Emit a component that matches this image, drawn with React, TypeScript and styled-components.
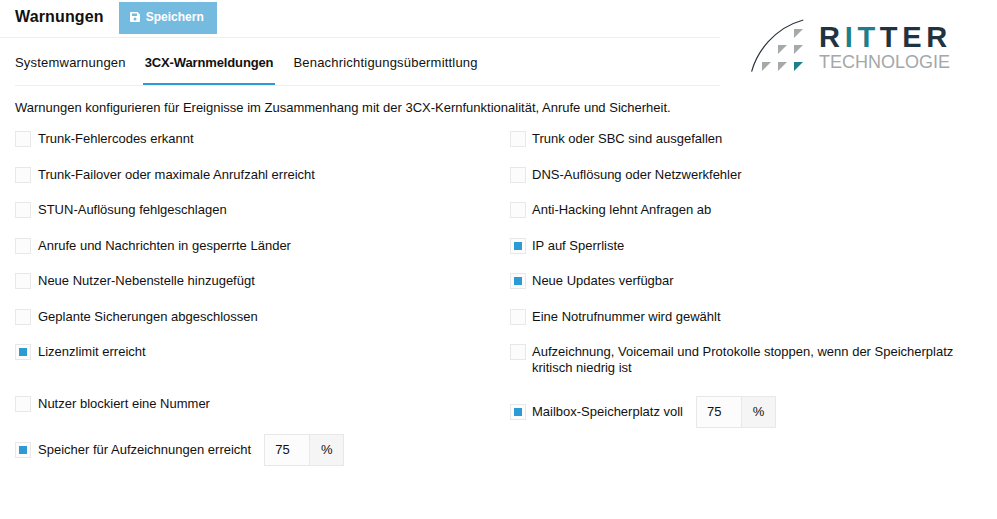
import React from 'react';
import styled, { createGlobalStyle } from 'styled-components';

const GlobalStyle = createGlobalStyle`
  html, body {
    margin: 0;
    background: #fff;
    color: #111;
    font-family: "Liberation Sans", Arial, sans-serif;
    font-size: 13px;
  }
`;

const Page = styled.div`
  width: 997px;
  height: 519px;
  overflow: hidden;
`;

const Top = styled.div`
  display: flex;
`;

const TopLeft = styled.div`
  width: 720px;
  flex: none;
`;

const Toolbar = styled.div`
  display: flex;
  align-items: flex-start;
  height: 38px;
  padding: 2px 0 0 15px;
  border-bottom: 1px solid #eee;
  box-sizing: border-box;
`;

const Title = styled.h1`
  margin: 3px 15px 0 0;
  font-size: 16px;
  line-height: 24px;
  font-weight: 700;
  letter-spacing: 0.15px;
`;

const SaveButton = styled.button`
  display: flex;
  align-items: center;
  gap: 6px;
  width: 98px;
  height: 32px;
  padding: 0 0 2px 11px;
  border: 0;
  background: #75bbe0;
  color: #fff;
  font: 700 12px "Liberation Sans", Arial, sans-serif;
`;

const Tabs = styled.div`
  display: flex;
  margin-left: 15px;
  height: 48px;
  border-bottom: 1px solid #eee;
  box-sizing: border-box;
`;

const Tab = styled.div<{ $active?: boolean }>`
  display: flex;
  align-items: center;
  height: 47px;
  padding: 3px 2px 0;
  margin-right: 16px;
  font-size: 13px;
  font-weight: ${(p) => (p.$active ? 700 : 400)};
  letter-spacing: ${(p) => (p.$active ? '-0.13px' : '0.2px')};
  border-bottom: 2px solid ${(p) => (p.$active ? '#2d9ad4' : 'transparent')};
  box-sizing: border-box;
  &:first-child {
    padding-left: 0;
    margin-right: 15px;
  }
`;

const Logo = styled.div`
  display: flex;
  align-items: flex-start;
  margin: 19px 0 0 29px;
`;

const LogoText = styled.div`
  display: flex;
  flex-direction: column;
  margin-left: 14px;
  margin-top: 4px;
`;

const LogoName = styled.div`
  font-size: 29px;
  line-height: 29px;
  font-weight: 700;
  letter-spacing: 4.7px;
  color: #1f3340;
`;

const LogoAccent = styled.span`
  color: #1d7f8c;
`;

const LogoSub = styled.div`
  font-size: 18px;
  line-height: 20px;
  color: #a3a8a8;
`;

const Intro = styled.p`
  margin: 14px 0 15px 15px;
  line-height: 16px;
`;

const Options = styled.div`
  display: grid;
  grid-template-columns: 495px 465px;
  grid-template-rows: repeat(6, 35.5px) 52px 38px 32px;
  padding-left: 15px;
`;

const Row = styled.label<{ $right?: boolean }>`
  display: flex;
  align-items: flex-start;
  gap: ${(p) => (p.$right ? '6px' : '7px')};
  line-height: 16px;
`;

const CenterRow = styled(Row)`
  align-items: center;
  align-self: start;
  height: 32px;
`;

const Box = styled.span<{ $on?: boolean }>`
  flex: none;
  display: flex;
  align-items: center;
  justify-content: center;
  width: 16px;
  height: 16px;
  border: 1px solid #e8e8e8;
  background: #fcfcfc;
  box-sizing: border-box;
  &::after {
    content: '';
    display: ${(p) => (p.$on ? 'block' : 'none')};
    width: 8px;
    height: 8px;
    background: #2d9ad4;
  }
`;

const Limit = styled.span<{ $right?: boolean }>`
  display: flex;
  height: 32px;
  margin-left: ${(p) => (p.$right ? '7px' : '6px')};
  border: 1px solid #e8e8e8;
  box-sizing: border-box;
  line-height: 30px;
`;

const LimitValue = styled.span`
  width: 44px;
  padding-left: 10px;
  box-sizing: border-box;
  background: #fcfcfc;
`;

const LimitUnit = styled.span`
  width: 34px;
  text-align: center;
  background: #f5f5f5;
  border-left: 1px solid #e8e8e8;
  box-sizing: border-box;
`;

function Option(props: { on?: boolean; right?: boolean; children: React.ReactNode }) {
  return (
    <Row $right={props.right}>
      <Box $on={props.on} />
      <span>{props.children}</span>
    </Row>
  );
}

function LimitOption(props: { right?: boolean; children: React.ReactNode }) {
  return (
    <CenterRow $right={props.right}>
      <Box $on />
      <span>{props.children}</span>
      <Limit $right={props.right}>
        <LimitValue>75</LimitValue>
        <LimitUnit>%</LimitUnit>
      </Limit>
    </CenterRow>
  );
}

function SaveIcon() {
  return (
    <svg width="10" height="10" viewBox="0 0 10 10">
      <path
        fill="#fff"
        fillRule="evenodd"
        d="M0 1a1 1 0 0 1 1-1h6.5L10 2.5V9a1 1 0 0 1-1 1H1a1 1 0 0 1-1-1zM2 1.5V4h5V1.5zM5 5.5a1.5 1.5 0 1 0 0 3 1.5 1.5 0 0 0 0-3z"
      />
    </svg>
  );
}

function LogoMark() {
  const grey = '#a5aaa9';
  const cells: [number, number, string][] = [
    [45, 10, grey],
    [29, 26, grey],
    [45, 26, grey],
    [13, 43, grey],
    [29, 43, grey],
    [45, 43, '#1d7f8c'],
  ];
  return (
    <svg width="56" height="54" viewBox="0 0 56 54">
      <path d="M2.6 52.7C8 33 25 9 54.3 1" fill="none" stroke="#27343d" strokeWidth="1.2" />
      {cells.map(([x, y, fill]) => (
        <polygon key={`${x}-${y}`} points={`${x},${y} ${x + 9},${y} ${x},${y + 9}`} fill={fill} />
      ))}
    </svg>
  );
}

export default function App() {
  return (
    <Page>
      <GlobalStyle />
      <Top>
        <TopLeft>
          <Toolbar>
            <Title>Warnungen</Title>
            <SaveButton>
              <SaveIcon />
              Speichern
            </SaveButton>
          </Toolbar>
          <Tabs>
            <Tab>Systemwarnungen</Tab>
            <Tab $active>3CX-Warnmeldungen</Tab>
            <Tab>Benachrichtigungsübermittlung</Tab>
          </Tabs>
        </TopLeft>
        <Logo>
          <LogoMark />
          <LogoText>
            <LogoName>
              R<LogoAccent>IT</LogoAccent>TER
            </LogoName>
            <LogoSub>TECHNOLOGIE</LogoSub>
          </LogoText>
        </Logo>
      </Top>
      <Intro>
        Warnungen konfigurieren für Ereignisse im Zusammenhang mit der 3CX-Kernfunktionalität, Anrufe und Sicherheit.
      </Intro>
      <Options>
        <Option>Trunk-Fehlercodes erkannt</Option>
        <Option right>Trunk oder SBC sind ausgefallen</Option>
        <Option>Trunk-Failover oder maximale Anrufzahl erreicht</Option>
        <Option right>DNS-Auflösung oder Netzwerkfehler</Option>
        <Option>STUN-Auflösung fehlgeschlagen</Option>
        <Option right>Anti-Hacking lehnt Anfragen ab</Option>
        <Option>Anrufe und Nachrichten in gesperrte Länder</Option>
        <Option right on>IP auf Sperrliste</Option>
        <Option>Neue Nutzer-Nebenstelle hinzugefügt</Option>
        <Option right on>Neue Updates verfügbar</Option>
        <Option>Geplante Sicherungen abgeschlossen</Option>
        <Option right>Eine Notrufnummer wird gewählt</Option>
        <Option on>Lizenzlimit erreicht</Option>
        <Option right>
          Aufzeichnung, Voicemail und Protokolle stoppen, wenn der Speicherplatz kritisch niedrig ist
        </Option>
        <Option>Nutzer blockiert eine Nummer</Option>
        <LimitOption right>Mailbox-Speicherplatz voll</LimitOption>
        <LimitOption>Speicher für Aufzeichnungen erreicht</LimitOption>
      </Options>
    </Page>
  );
}
